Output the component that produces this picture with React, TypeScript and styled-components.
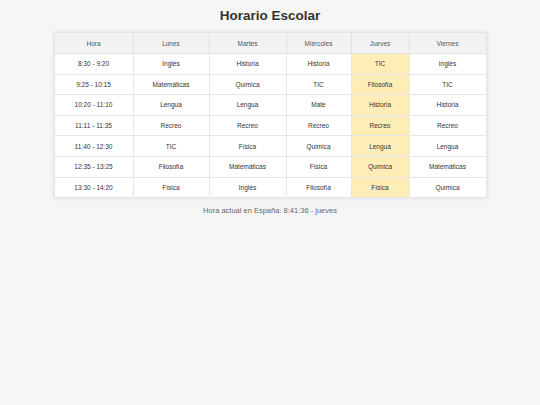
import React from "react";
import styled, { createGlobalStyle } from "styled-components";

const Global = createGlobalStyle`
  html, body { margin: 0; padding: 0; background: #f6f6f6; }
  body { font-family: "Liberation Sans", Arial, sans-serif; }
`;

const Page = styled.div`
  display: flex;
  flex-direction: column;
  align-items: center;
  padding-top: 7px;
`;

const Title = styled.h1`
  margin: 0 0 7px;
  font-size: 13.5px;
  font-weight: bold;
  color: #333;
  line-height: 18px;
`;

const Table = styled.table`
  width: 432px;
  border-collapse: collapse;
  table-layout: fixed;
  background: #fff;
  box-shadow: 0 0 4px rgba(0, 0, 0, 0.1);
`;

const Col = styled.col<{ $w: number }>`
  width: ${(p) => p.$w}px;
`;

const Th = styled.th`
  background: #f2f2f2;
  color: #555;
  font-weight: normal;
  font-size: 6.5px;
  height: 20px;
  padding: 0;
  border: 1px solid #e2e2e2;
  text-align: center;
`;

const Td = styled.td<{ $today?: boolean }>`
  background: ${(p) => (p.$today ? "#ffedb8" : "#fff")};
  color: #333;
  font-size: 6.5px;
  height: 19.6px;
  padding: 0;
  border: 1px solid #e6e6e6;
  text-align: center;
`;

const Footer = styled.p`
  margin: 8px 0 0;
  font-size: 7.5px;
  color: #666;
`;

const widths = [79, 76, 77, 65, 58, 77];
const headers = ["Hora", "Lunes", "Martes", "Miércoles", "Jueves", "Viernes"];
const rows = [
  ["8:30 - 9:20", "Inglés", "Historia", "Historia", "TIC", "Inglés"],
  ["9:25 - 10:15", "Matemáticas", "Química", "TIC", "Filosofía", "TIC"],
  ["10:20 - 11:10", "Lengua", "Lengua", "Mate", "Historia", "Historia"],
  ["11:11 - 11:35", "Recreo", "Recreo", "Recreo", "Recreo", "Recreo"],
  ["11:40 - 12:30", "TIC", "Física", "Química", "Lengua", "Lengua"],
  ["12:35 - 13:25", "Filosofía", "Matemáticas", "Física", "Química", "Matemáticas"],
  ["13:30 - 14:20", "Física", "Inglés", "Filosofía", "Física", "Química"],
];

export default function App() {
  return (
    <Page>
      <Global />
      <Title>Horario Escolar</Title>
      <Table>
        <colgroup>
          {widths.map((w, i) => (
            <Col key={i} $w={w} />
          ))}
        </colgroup>
        <thead>
          <tr>
            {headers.map((h) => (
              <Th key={h}>{h}</Th>
            ))}
          </tr>
        </thead>
        <tbody>
          {rows.map((r, i) => (
            <tr key={i}>
              {r.map((c, j) => (
                <Td key={j} $today={j === 4}>
                  {c}
                </Td>
              ))}
            </tr>
          ))}
        </tbody>
      </Table>
      <Footer>Hora actual en España: 8:41:36 - jueves</Footer>
    </Page>
  );
}
